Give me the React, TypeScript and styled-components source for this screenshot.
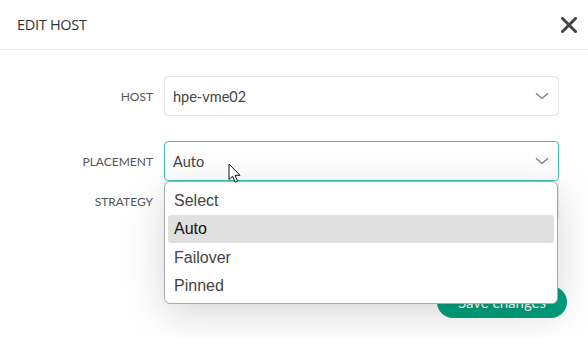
import styled, { createGlobalStyle } from "styled-components";

const GlobalStyle = createGlobalStyle`
  html, body {
    margin: 0;
    padding: 0;
    background: #ffffff;
  }
  body {
    font-family: Lato, "Noto Sans", sans-serif;
    color: #333;
  }
`;

const Modal = styled.div`
  width: 588px;
  height: 338px;
  background: #fff;
  position: relative;
  overflow: hidden;
`;

const Header = styled.div`
  height: 49px;
  border-bottom: 1px solid #e6e6e6;
  display: flex;
  align-items: center;
  justify-content: space-between;
  padding: 0 11px 0 17px;
`;

const Title = styled.h2`
  margin: 0;
  font-family: "Open Sans", sans-serif;
  font-weight: 400;
  font-size: 14.5px;
  color: #333;
  letter-spacing: -0.3px;
`;

const CloseButton = styled.button`
  border: 0;
  background: none;
  padding: 0;
  width: 16px;
  height: 16px;
  display: flex;
  cursor: pointer;
`;

const Body = styled.div`
  padding: 26px 29px 0 0;
  display: flex;
  flex-direction: column;
`;

const Row = styled.div<{ $top?: number }>`
  display: grid;
  grid-template-columns: 153px 1fr;
  column-gap: 11px;
  align-items: center;
  margin-top: ${(p) => p.$top ?? 0}px;
  position: relative;
`;

const Label = styled.label`
  text-align: right;
  font-size: 12px;
  color: #555;
  text-transform: uppercase;
`;

const Select = styled.div<{ $focused?: boolean }>`
  height: 40px;
  box-sizing: border-box;
  border: 1px solid ${(p) => (p.$focused ? "#3fc3b0" : "#e6e6e6")};
  border-radius: 4px;
  display: flex;
  align-items: center;
  justify-content: space-between;
  padding: 0 9px 0 8px;
  font-size: 14.5px;
  color: #444;
`;

const Menu = styled.ul`
  position: absolute;
  left: 164px;
  right: 1px;
  top: 40px;
  margin: 0;
  padding: 4px 3px 3px;
  list-style: none;
  background: #fff;
  border: 1px solid #a9a9a9;
  border-radius: 6px;
  box-shadow: 0 10px 40px rgba(0, 0, 0, 0.16);
  z-index: 2;
  font-family: "Liberation Sans", Arial, sans-serif;
  font-size: 16px;
`;

const Option = styled.li<{ $active?: boolean }>`
  height: 28.5px;
  display: flex;
  align-items: center;
  padding: 1px 6px 0;
  box-sizing: border-box;
  border-radius: 3px;
  color: ${(p) => (p.$active ? "#111" : "#444")};
  background: ${(p) => (p.$active ? "#e0e0e0" : "transparent")};
`;

const Footer = styled.div`
  display: flex;
  justify-content: flex-end;
  padding: 65px 21px 0 0;
`;

const SaveButton = styled.button`
  height: 32px;
  padding: 0 21px;
  border: 0;
  border-radius: 16px;
  background: #01a07c;
  color: #fff;
  font-family: Lato, sans-serif;
  font-size: 15px;
`;

const Cursor = styled.svg`
  position: absolute;
  left: 228px;
  top: 163px;
  z-index: 3;
`;

const Chevron = () => (
  <svg width="14" height="8" viewBox="0 0 14 8">
    <path d="M1 1.2 L7 6.4 L13 1.2" fill="none" stroke="#7a7a7a" strokeWidth="1.3" />
  </svg>
);

export default function App() {
  return (
    <>
      <GlobalStyle />
      <Modal>
        <Header>
          <Title>EDIT HOST</Title>
          <CloseButton aria-label="Close">
            <svg width="16" height="16" viewBox="0 0 16 16">
              <path d="M1.5 1.5 L14.5 14.5 M14.5 1.5 L1.5 14.5" stroke="#444" strokeWidth="3" strokeLinecap="square" />
            </svg>
          </CloseButton>
        </Header>
        <Body>
          <Row>
            <Label>Host</Label>
            <Select>
              hpe-vme02
              <Chevron />
            </Select>
          </Row>
          <Row $top={25}>
            <Label>Placement</Label>
            <Select $focused>
              Auto
              <Chevron />
            </Select>
            <Menu>
              <Option>Select</Option>
              <Option $active>Auto</Option>
              <Option>Failover</Option>
              <Option>Pinned</Option>
            </Menu>
          </Row>
          <Row $top={0}>
            <Label>Strategy</Label>
            <Select>
              <span />
              <Chevron />
            </Select>
          </Row>
        </Body>
        <Footer>
          <SaveButton>Save changes</SaveButton>
        </Footer>
        <Cursor width="16" height="22" viewBox="0 0 16 22">
          <path d="M1 1 L1 16.5 L4.6 13.2 L7.2 19.2 L9.6 18.1 L7.1 12.3 L12 12.3 Z" fill="#fff" stroke="#111" strokeWidth="1" strokeLinejoin="round" />
        </Cursor>
      </Modal>
    </>
  );
}
